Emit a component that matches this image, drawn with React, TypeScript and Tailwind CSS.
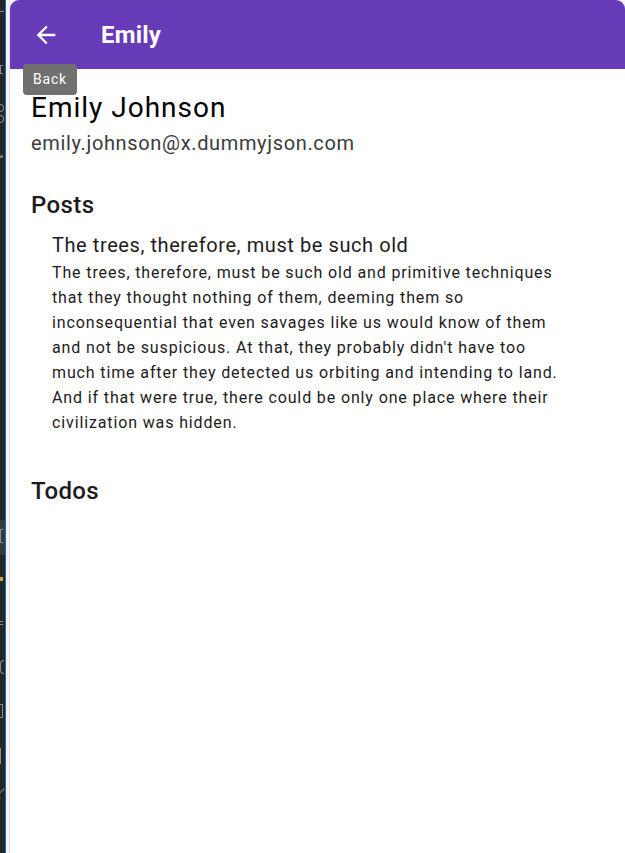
import { ReactNode } from "react";

const body =
  "The trees, therefore, must be such old and primitive techniques that they thought nothing of them, deeming them so inconsequential that even savages like us would know of them and not be suspicious. At that, they probably didn't have too much time after they detected us orbiting and intending to land. And if that were true, there could be only one place where their civilization was hidden.";

function Section({ title, className, children }: { title: string; className: string; children?: ReactNode }) {
  return (
    <section className={className}>
      <h2 className="text-[24px] leading-[32px] font-medium tracking-[0.4px] text-[#1d1b20]">{title}</h2>
      {children}
    </section>
  );
}

export default function App() {
  return (
    <div
      className="flex h-[853px] w-[625px] overflow-hidden bg-[#f3f3f3]"
      style={{ fontFamily: "Roboto, 'Noto Sans', sans-serif" }}
    >
      {/* editor sidebar peeking in from behind */}
      <div className="flex w-[5px] shrink-0 flex-col items-start bg-[#252526] pt-[11px]">
        <div className="h-px w-[4px] bg-[#8a8a8a]" />
        <div className="mt-[53px] h-[9px] w-[3px] border-y border-l border-[#8a8a8a]" />
        <div className="mt-[30px] h-[8px] w-[4px] rounded-r-full border border-l-0 border-[#8a8a8a]" />
        <div className="mt-[3px] h-[8px] w-[4px] rounded-r-full border border-l-0 border-[#8a8a8a]" />
        <div className="mt-[32px] h-[3px] w-[3px] rounded-full bg-[#8a8a8a]" />
        <div className="mt-[362px] h-[35px] w-[5px] bg-[#37373d] pt-[9px]">
          <div className="h-[14px] w-[3px] border-y border-l border-[#8a8a8a]" />
        </div>
        <div className="mt-[22px] h-[4px] w-[3px] bg-[#d7a52a]" />
        <div className="mt-[40px] h-px w-[3px] bg-[#8a8a8a]" />
        <div className="mt-[2px] h-px w-[3px] bg-[#8a8a8a]" />
        <div className="mt-[35px] h-[14px] w-[4px] rounded-l-full border border-r-0 border-[#8a8a8a]" />
        <div className="mt-[30px] h-[14px] w-[3px] border-y border-r border-[#8a8a8a]" />
        <div className="mt-[30px] h-[16px] w-px bg-[#8a8a8a]" />
        <div className="mt-[24px] h-[10px] w-[4px] border-b border-l border-[#8a8a8a] rotate-45" />
      </div>
      <div className="w-px shrink-0 bg-[#0e70c0]" />
      <div className="w-[4px] shrink-0 border-r border-[#e2e2e2] bg-[#f3f3f3]" />

      {/* app window */}
      <div className="relative flex min-w-0 flex-1 flex-col overflow-hidden rounded-t-[9px] bg-white">
        <header className="flex h-[69px] shrink-0 items-center bg-[#673ab7] pl-[22px] text-white">
          <svg width="28" height="28" viewBox="0 0 24 24" fill="currentColor">
            <path d="M20 11H7.83l5.59-5.59L12 4l-8 8 8 8 1.41-1.41L7.83 13H20v-2z" />
          </svg>
          <h1 className="ml-[41px] text-[24px] font-bold leading-none tracking-[0.2px]">Emily</h1>
        </header>

        <div className="absolute left-[13px] top-[64px] rounded-[4px] bg-[#707070] px-[10px] py-[6px] text-[14px] leading-[19px] tracking-[0.8px] text-white">
          Back
        </div>

        <main className="px-[21px] pt-[21px]">
          <p className="text-[28px] leading-[36px] tracking-[1px] text-black">Emily Johnson</p>
          <p className="mt-[3px] text-[20px] leading-[28px] tracking-[0.65px] text-[#3b3b3b]">
            emily.johnson@x.dummyjson.com
          </p>

          <Section title="Posts" className="mt-[32px]">
            <article className="mt-[10px] pl-[21px] pr-[36px]">
              <h3 className="text-[20px] leading-[29px] tracking-[0.58px] text-[#1d1b20]">
                The trees, therefore, must be such old
              </h3>
              <p className="text-[16px] leading-[25px] tracking-[0.87px] text-[#1d1b20]">{body}</p>
            </article>
          </Section>

          <Section title="Todos" className="mt-[40px]" />
        </main>
      </div>
    </div>
  );
}
